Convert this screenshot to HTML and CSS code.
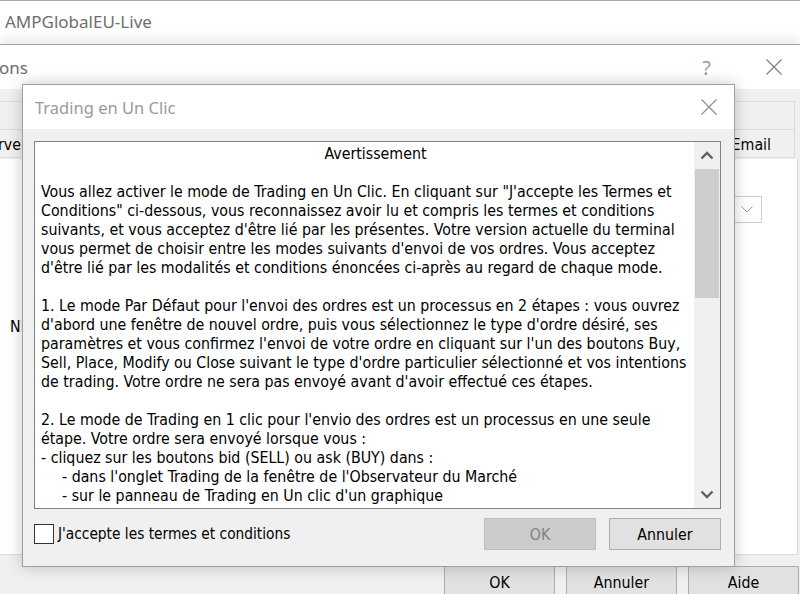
FILE: index.html
```html
<!DOCTYPE html>
<html lang="fr">
<head>
<meta charset="utf-8">
<title>Trading en Un Clic</title>
<link rel="stylesheet" href="styles.css">
</head>
<body>
<div class="topbar"><span class="app-title">AMPGlobalEU-Live</span></div>
<div class="bgwin">
  <div class="bg-titlebar">
    <span class="bg-title">ons</span>
    <div class="bg-controls">
      <span class="help">?</span>
      <svg class="xicon" width="16" height="16" viewBox="0 0 16 16"><path d="M0.5 0.5 L15.5 15.5 M15.5 0.5 L0.5 15.5" stroke="#7a7a7a" stroke-width="1.1" fill="none"/></svg>
    </div>
  </div>
  <div class="bg-body">
    <div class="tabrow"></div>
    <div class="headrow"><span class="h-left">rve</span><span class="h-right">Email</span></div>
    <div class="list">
      <span class="ni">Ni</span>
      <div class="combo"><svg width="12" height="7" viewBox="0 0 12 7"><path d="M0.5 0.5 L6 6 L11.5 0.5" stroke="#9a9a9a" stroke-width="1" fill="none"/></svg></div>
    </div>
    <div class="bg-buttons">
      <button class="btn bg-btn">OK</button>
      <button class="btn bg-btn">Annuler</button>
      <button class="btn bg-btn">Aide</button>
    </div>
  </div>
</div>

<div class="dialog">
  <div class="dlg-titlebar">
    <span class="dlg-title">Trading en Un Clic</span>
    <svg class="dlg-x" width="16" height="16" viewBox="0 0 16 16"><path d="M0.5 0.5 L15.5 15.5 M15.5 0.5 L0.5 15.5" stroke="#8a8a8a" stroke-width="1.1" fill="none"/></svg>
  </div>
  <div class="dlg-body">
    <div class="textbox">
      <div class="text">
        <div class="heading">Avertissement</div>
        <div class="blank"></div>
        <div class="para">Vous allez activer le mode de Trading en Un Clic. En cliquant sur "J'accepte les Termes et<br>Conditions" ci-dessous, vous reconnaissez avoir lu et compris les termes et conditions<br>suivants, et vous acceptez d'être lié par les présentes. Votre version actuelle du terminal<br>vous permet de choisir entre les modes suivants d'envoi de vos ordres. Vous acceptez<br>d'être lié par les modalités et conditions énoncées ci-après au regard de chaque mode.</div>
        <div class="blank"></div>
        <div class="para">1. Le mode Par Défaut pour l'envoi des ordres est un processus en 2 étapes : vous ouvrez<br>d'abord une fenêtre de nouvel ordre, puis vous sélectionnez le type d'ordre désiré, ses<br>paramètres et vous confirmez l'envoi de votre ordre en cliquant sur l'un des boutons Buy,<br>Sell, Place, Modify ou Close suivant le type d'ordre particulier sélectionné et vos intentions<br>de trading. Votre ordre ne sera pas envoyé avant d'avoir effectué ces étapes.</div>
        <div class="blank"></div>
        <div class="para">2. Le mode de Trading en 1 clic pour l'envio des ordres est un processus en une seule<br>étape. Votre ordre sera envoyé lorsque vous :<br>- cliquez sur les boutons bid (SELL) ou ask (BUY) dans :</div>
        <div class="para indent">- dans l'onglet Trading de la fenêtre de l'Observateur du Marché<br>- sur le panneau de Trading en Un clic d'un graphique</div>
      </div>
      <div class="scrollbar">
        <div class="arrow"><svg width="14" height="9" viewBox="0 0 14 9"><path d="M1.5 7.5 L7 2 L12.5 7.5" stroke="#606060" stroke-width="2.4" fill="none"/></svg></div>
        <div class="track"><div class="thumb"></div></div>
        <div class="arrow"><svg width="14" height="9" viewBox="0 0 14 9"><path d="M1.5 1.5 L7 7 L12.5 1.5" stroke="#606060" stroke-width="2.4" fill="none"/></svg></div>
      </div>
    </div>
    <div class="dlg-footer">
      <label class="check"><span class="box"></span><span class="check-label">J'accepte les termes et conditions</span></label>
      <div class="dlg-buttons">
        <button class="btn disabled">OK</button>
        <button class="btn">Annuler</button>
      </div>
    </div>
  </div>
</div>
</body>
</html>
```

FILE: styles.css
```css
* { box-sizing: border-box; }
html, body { margin: 0; padding: 0; }
body {
  width: 800px;
  height: 594px;
  overflow: hidden;
  background: #f0f0f0;
  font-family: "DejaVu Sans Condensed", "DejaVu Sans", sans-serif;
  font-size: 15.8px;
  color: #000;
  position: relative;
}
.topbar {
  height: 44px;
  background: #fff;
  border-top: 1px solid #a8a8a8;
  display: flex;
  align-items: center;
  padding-left: 5px;
  padding-bottom: 2px;
}
.app-title {
  font-family: "Noto Sans", "Open Sans", sans-serif;
  font-size: 17px;
  color: #6e6e6e;
}
.bgwin {
  border-top: 1px solid #a4a4a4;
  box-shadow: 0 -6px 10px rgba(0,0,0,0.08);
  position: relative;
  height: 550px;
}
.bg-titlebar {
  height: 44px;
  background: #fff;
  display: flex;
  align-items: center;
  justify-content: space-between;
}
.bg-title {
  font-family: "Noto Sans", "Open Sans", sans-serif;
  font-size: 17px;
  color: #6e6e6e;
  margin-left: -1px;
}
.bg-controls {
  display: flex;
  align-items: center;
  gap: 55px;
  padding-right: 18px;
}
.help {
  font-family: "Noto Sans", sans-serif;
  font-size: 20px;
  color: #9a9a9a;
}
.bg-body {
  background: #f0f0f0;
  padding-top: 12px;
}
.tabrow {
  height: 29px;
  width: 795px;
  border-top: 1px solid #dcdcdc;
  border-bottom: 1px solid #dcdcdc;
  border-right: 1px solid #dcdcdc;
}
.headrow {
  height: 28px;
  width: 795px;
  border-bottom: 1px solid #dcdcdc;
  border-right: 1px solid #dcdcdc;
  display: flex;
  align-items: center;
  justify-content: space-between;
  padding-top: 1px;
}
.h-left { margin-left: -2px; }
.h-right { margin-right: 23px; }
.list {
  height: 396px;
  width: 798px;
  background: #fff;
  border-right: 1px solid #dcdcdc;
  border-bottom: 1px solid #dcdcdc;
  position: relative;
  margin-top: 1px;
}
.ni {
  position: absolute;
  left: 10px;
  top: 158px;
}
.combo {
  position: absolute;
  left: 720px;
  top: 37px;
  width: 42px;
  height: 27px;
  border: 1px solid #cfcfcf;
  background: #fff;
  display: flex;
  align-items: center;
  justify-content: flex-end;
  padding-right: 8px;
}
.bg-buttons {
  display: flex;
  justify-content: flex-end;
  gap: 11px;
  padding-top: 11px;
  padding-right: 1px;
}
.btn {
  font-family: "DejaVu Sans Condensed", "DejaVu Sans", sans-serif;
  font-size: 15.8px;
  color: #000;
  background: #e1e1e1;
  border: 1px solid #adadad;
  width: 112px;
  height: 32px;
  padding: 0;
  margin: 0;
}
.bg-btn { width: 111px; }

.dialog {
  position: absolute;
  left: 22px;
  top: 84px;
  width: 713px;
  height: 483px;
  border: 1px solid #a0a0a0;
  background: #f0f0f0;
  box-shadow: 0 0 14px rgba(0,0,0,0.22);
  display: flex;
  flex-direction: column;
}
.dlg-titlebar {
  height: 44px;
  background: #fff;
  display: flex;
  align-items: center;
  justify-content: space-between;
  padding: 0 17px 0 12px;
  flex: none;
}
.dlg-title {
  font-family: "Noto Sans", "Open Sans", sans-serif;
  font-size: 16.5px;
  color: #9a9a9a;
}
.dlg-body {
  flex: 1;
  padding: 12px 13px 0 11px;
  display: flex;
  flex-direction: column;
}
.textbox {
  height: 368px;
  border: 1px solid #828282;
  background: #fff;
  display: flex;
  overflow: hidden;
}
.text {
  flex: 1;
  padding: 2px 0 0 6px;
  line-height: 19px;
  white-space: nowrap;
  overflow: hidden;
}
.heading {
  text-align: center;
  padding-left: 16px;
}
.blank { height: 19px; }
.indent { padding-left: 21px; }
.scrollbar {
  width: 26px;
  flex: none;
  background: #f0f0f0;
  display: flex;
  flex-direction: column;
}
.arrow {
  height: 27px;
  display: flex;
  align-items: center;
  justify-content: center;
  flex: none;
}
.track { flex: 1; }
.thumb {
  height: 129px;
  background: #cdcdcd;
  margin: 0 1px;
}
.dlg-footer {
  display: flex;
  align-items: center;
  justify-content: space-between;
  margin-top: 9px;
}
.check {
  display: flex;
  align-items: center;
  gap: 4px;
}
.check-label { font-size: 15.3px; }
.box {
  width: 20px;
  height: 20px;
  border: 1px solid #333;
  background: #fff;
}
.dlg-buttons {
  display: flex;
  gap: 13px;
}
.btn.disabled {
  background: #cccccc;
  border-color: #bfbfbf;
  color: #838383;
}
```
